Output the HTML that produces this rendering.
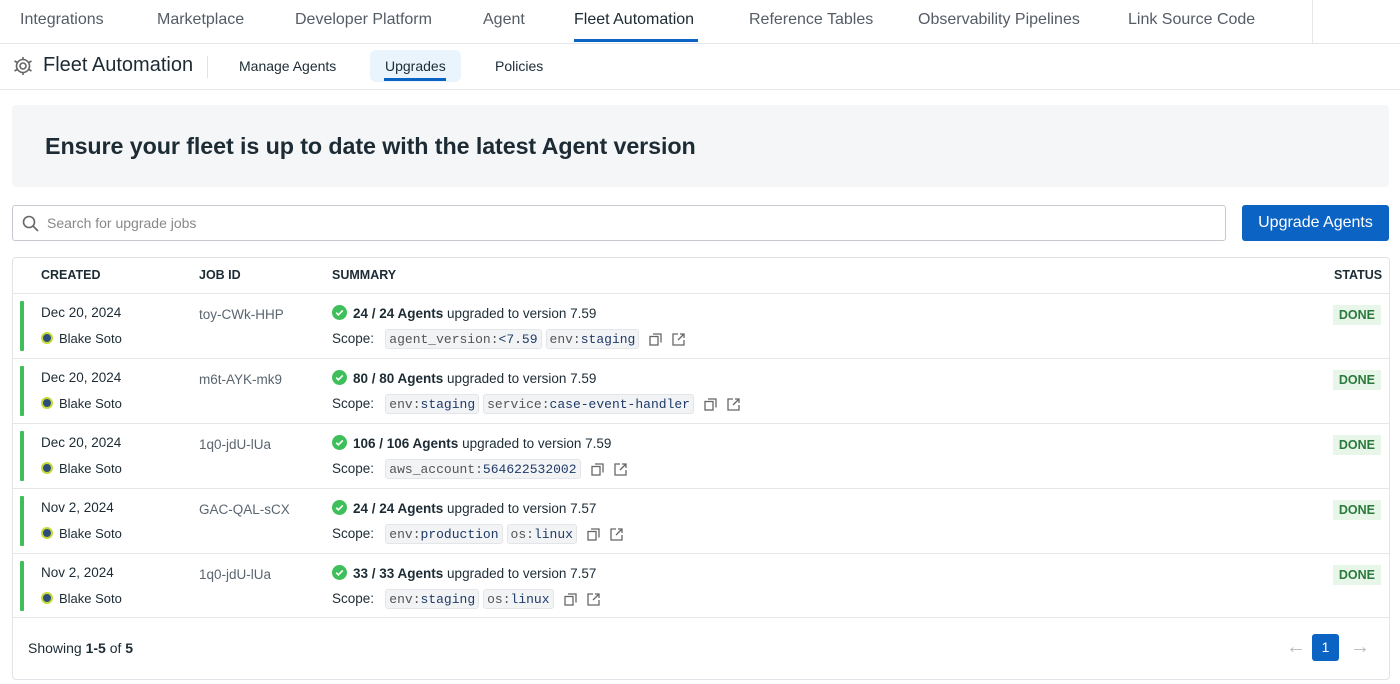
<!DOCTYPE html><html><head><meta charset="utf-8"><style>
*{box-sizing:border-box;margin:0;padding:0}
body{width:1400px;height:684px;overflow:hidden;background:#fff;font-family:"Liberation Sans",sans-serif;color:#1c2b34;position:relative}
.a{position:absolute}
.top{left:0;top:0;width:1400px;height:44px;border-bottom:1px solid #e4e6ea}
.top span{position:absolute;top:11px;font-size:16px;color:#555c66}
.sub{left:0;top:44px;width:1400px;height:46px;border-bottom:1px solid #e4e6ea}
.banner{left:12px;top:105px;width:1377px;height:82px;background:#f4f6f8;border-radius:4px}
.search{left:12px;top:205px;width:1214px;height:36px;border:1px solid #c6cad0;border-radius:3px}
.btn{left:1242px;top:205px;width:147px;height:36px;background:#0b63c4;border-radius:3px;color:#fff;font-size:16px;text-align:center;line-height:36px}
.tbl{left:12px;top:257px;width:1378px;height:423px;border:1px solid #e0e3e7;border-radius:4px}
.th{font-size:12.5px;font-weight:bold;top:268px;color:#1c2b34}
.row{left:13px;width:1376px;height:65px;border-top:1px solid #e4e6ea}
.bar{position:absolute;left:7px;top:7px;width:4px;height:50px;background:#3ebf5a;border-radius:1px}
.t{position:absolute;font-size:13.5px}
.code{display:inline-block;background:#f2f3f5;border:1px solid #e3e5e8;border-radius:3px;font-family:"Liberation Mono",monospace;font-size:13px;padding:0 3px;height:20px;line-height:19px;margin-right:4px;color:#555}
.code b{font-weight:normal;color:#1f3a68}
.done{position:absolute;right:8px;top:11px;background:#e8f6ea;color:#2a7a3b;font-size:12.5px;font-weight:bold;padding:3px 6px}
.ic{display:inline-block;vertical-align:middle;margin-left:6px}
</style></head><body>
<div class="a top">
<span style="left:20px">Integrations</span><span style="left:157px">Marketplace</span><span style="left:295px">Developer Platform</span><span style="left:483px">Agent</span><span style="left:574px;color:#1c2b34">Fleet Automation</span><span style="left:749px">Reference Tables</span><span style="left:918px">Observability Pipelines</span><span style="left:1128px">Link Source Code</span>
<div class="a" style="left:574px;top:39px;width:124px;height:3px;background:#0b63c4"></div>
<div class="a" style="left:1312px;top:0;width:1px;height:44px;background:#e4e6ea"></div>
</div>
<div class="a sub">
<svg class="a" style="left:13px;top:12px" width="20" height="20" viewBox="0 0 20 20" fill="none" stroke="#666" stroke-width="1.6"><circle cx="10" cy="10" r="3"/><circle cx="10" cy="10" r="6.5"/><path d="M10 1v3M10 16v3M1.5 5l2.6 1.5M15.9 13.5l2.6 1.5M1.5 15l2.6-1.5M15.9 6.5L18.5 5"/></svg>
<div class="a" style="left:43px;top:10px;font-size:20px;color:#1c2b34">Fleet Automation</div>
<div class="a" style="left:207px;top:12px;width:1px;height:22px;background:#e0e3e7"></div>
<div class="a" style="left:239px;top:14px;font-size:14px">Manage Agents</div>
<div class="a" style="left:370px;top:6px;width:91px;height:32px;background:#eaf4fd;border-radius:6px"></div>
<div class="a" style="left:385px;top:14px;font-size:14px">Upgrades</div>
<div class="a" style="left:384px;top:34px;width:62px;height:3px;background:#0b63c4"></div>
<div class="a" style="left:495px;top:14px;font-size:14px">Policies</div>
</div>
<div class="a banner"><div class="a" style="left:33px;top:28px;font-size:23.3px;font-weight:bold;color:#1c2b34;letter-spacing:-0.1px">Ensure your fleet is up to date with the latest Agent version</div></div>
<div class="a search"><svg class="a" style="left:9px;top:9px" width="17" height="17" viewBox="0 0 17 17" fill="none" stroke="#666" stroke-width="1.6"><circle cx="7" cy="7" r="5.5"/><path d="M11 11l5 5"/></svg><div class="a" style="left:34px;top:9px;font-size:14px;color:#888">Search for upgrade jobs</div></div>
<div class="a btn">Upgrade Agents</div>
<div class="a tbl"></div>
<div class="a th" style="left:41px">CREATED</div><div class="a th" style="left:199px">JOB ID</div><div class="a th" style="left:332px">SUMMARY</div><div class="a th" style="left:1334px">STATUS</div>

<div id="rows"></div>
<div class="a" style="left:13px;top:617px;width:1376px;border-top:1px solid #e4e6ea"></div>
<div class="a" style="left:28px;top:640px;font-size:14px">Showing <b>1-5</b> of <b>5</b></div>
<div class="a" style="left:1286px;top:636px;font-size:20px;color:#bbb">&larr;</div>
<div class="a" style="left:1312px;top:634px;width:27px;height:27px;background:#0b63c4;border-radius:3px;color:#fff;font-size:14px;text-align:center;line-height:27px">1</div>
<div class="a" style="left:1350px;top:636px;font-size:20px;color:#bbb">&rarr;</div>
<script>
var d=[["Dec 20, 2024","toy-CWk-HHP","24 / 24","7.59",[["agent_version:","&lt;7.59"],["env:","staging"]]],
["Dec 20, 2024","m6t-AYK-mk9","80 / 80","7.59",[["env:","staging"],["service:","case-event-handler"]]],
["Dec 20, 2024","1q0-jdU-lUa","106 / 106","7.59",[["aws_account:","564622532002"]]],
["Nov 2, 2024","GAC-QAL-sCX","24 / 24","7.57",[["env:","production"],["os:","linux"]]],
["Nov 2, 2024","1q0-jdU-lUa","33 / 33","7.57",[["env:","staging"],["os:","linux"]]]];
var h="";d.forEach(function(r,i){var top=293+i*65;
var c=r[4].map(function(x){return '<span class="code">'+x[0]+'<b>'+x[1]+'</b></span>'}).join("");
h+='<div class="a row" style="top:'+top+'px"><div class="bar"></div><div class="t" style="left:28px;top:11px">'+r[0]+'</div>'+
'<div class="t" style="left:28px;top:37px;font-size:13px"><span style="display:inline-block;width:12px;height:12px;border-radius:50%;background:#2c4f7a;border:2px solid #c8d83a;vertical-align:-1px;margin-right:6px"></span>Blake Soto</div>'+
'<div class="t" style="left:186px;top:13px;color:#5a6570">'+r[1]+'</div>'+
'<div class="t" style="left:319px;top:11px"><svg width="15" height="15" viewBox="0 0 16 16" style="vertical-align:-2px;margin-right:6px"><circle cx="8" cy="8" r="8" fill="#3ebf5a"/><path d="M4.5 8.2l2.3 2.3 4.7-4.7" stroke="#fff" stroke-width="1.8" fill="none"/></svg><b>'+r[2]+' Agents</b> upgraded to version '+r[3]+'</div>'+
'<div class="t" style="left:319px;top:35px">Scope: &nbsp;&nbsp;'+c+
'<svg class="ic" width="13" height="13" viewBox="0 0 13 13" fill="none" stroke="#666" stroke-width="1.3"><rect x="1" y="3.5" width="8" height="8.5"/><path d="M4 1h8v8.5"/></svg><svg class="ic" style="margin-left:10px" width="13" height="13" viewBox="0 0 13 13" fill="none" stroke="#666" stroke-width="1.3"><path d="M6 1H1v11h11V7M8 1h4v4M12 1L6 7"/></svg></div>'+
'<div class="done">DONE</div></div>';});
document.getElementById("rows").innerHTML=h;
</script>
</body></html>
